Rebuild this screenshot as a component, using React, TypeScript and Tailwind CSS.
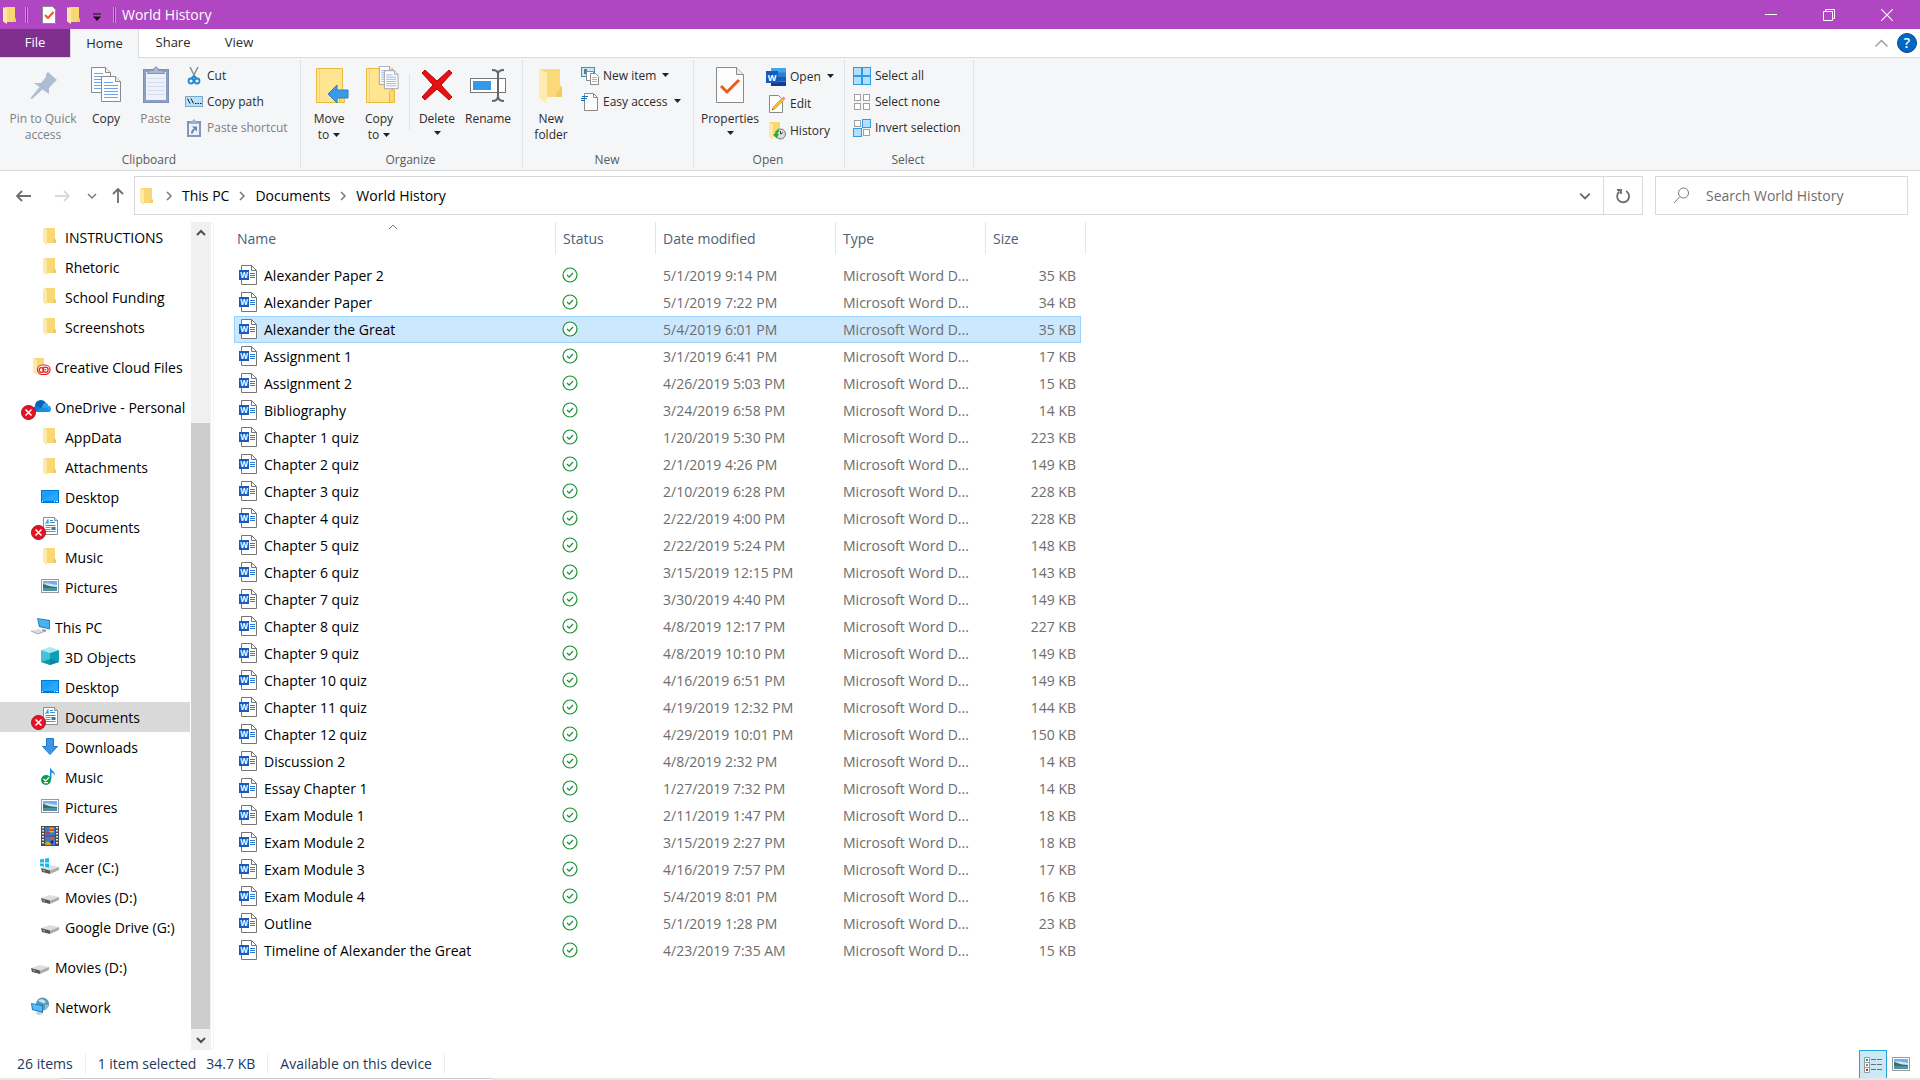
import { useState, type ReactNode } from "react"
import { clsx } from "clsx"

interface FileItem {
  name: string
  date: string
  size: string
}

interface NavItem {
  id: string
  label: string
  icon: ReactNode
  root?: boolean
  error?: boolean
}

const files: FileItem[] = [
  { name: "Alexander Paper 2", date: "5/1/2019 9:14 PM", size: "35 KB" },
  { name: "Alexander Paper", date: "5/1/2019 7:22 PM", size: "34 KB" },
  { name: "Alexander the Great", date: "5/4/2019 6:01 PM", size: "35 KB" },
  { name: "Assignment 1", date: "3/1/2019 6:41 PM", size: "17 KB" },
  { name: "Assignment 2", date: "4/26/2019 5:03 PM", size: "15 KB" },
  { name: "Bibliography", date: "3/24/2019 6:58 PM", size: "14 KB" },
  { name: "Chapter 1 quiz", date: "1/20/2019 5:30 PM", size: "223 KB" },
  { name: "Chapter 2 quiz", date: "2/1/2019 4:26 PM", size: "149 KB" },
  { name: "Chapter 3 quiz", date: "2/10/2019 6:28 PM", size: "228 KB" },
  { name: "Chapter 4 quiz", date: "2/22/2019 4:00 PM", size: "228 KB" },
  { name: "Chapter 5 quiz", date: "2/22/2019 5:24 PM", size: "148 KB" },
  { name: "Chapter 6 quiz", date: "3/15/2019 12:15 PM", size: "143 KB" },
  { name: "Chapter 7 quiz", date: "3/30/2019 4:40 PM", size: "149 KB" },
  { name: "Chapter 8 quiz", date: "4/8/2019 12:17 PM", size: "227 KB" },
  { name: "Chapter 9 quiz", date: "4/8/2019 10:10 PM", size: "149 KB" },
  { name: "Chapter 10 quiz", date: "4/16/2019 6:51 PM", size: "149 KB" },
  { name: "Chapter 11 quiz", date: "4/19/2019 12:32 PM", size: "144 KB" },
  { name: "Chapter 12 quiz", date: "4/29/2019 10:01 PM", size: "150 KB" },
  { name: "Discussion 2", date: "4/8/2019 2:32 PM", size: "14 KB" },
  { name: "Essay Chapter 1", date: "1/27/2019 7:32 PM", size: "14 KB" },
  { name: "Exam Module 1", date: "2/11/2019 1:47 PM", size: "18 KB" },
  { name: "Exam Module 2", date: "3/15/2019 2:27 PM", size: "18 KB" },
  { name: "Exam Module 3", date: "4/16/2019 7:57 PM", size: "17 KB" },
  { name: "Exam Module 4", date: "5/4/2019 8:01 PM", size: "16 KB" },
  { name: "Outline", date: "5/1/2019 1:28 PM", size: "23 KB" },
  { name: "Timeline of Alexander the Great", date: "4/23/2019 7:35 AM", size: "15 KB" },
]

/* ---------- small icons ---------- */

function FolderIcon() {
  return (
    <svg width="18" height="18" viewBox="0 0 18 18">
      <path d="M4 1h10v11l1 1v3H6z" fill="#f8d775" />
      <path d="M12.500 12l2.500 1v3h-3z" fill="#f3cb62" />
      <path d="M2 1l4 2v15l-4-2.500z" fill="#ffe9a6" />
    </svg>
  )
}

function DesktopIcon() {
  return (
    <svg width="18" height="18" viewBox="0 0 18 18">
      <rect y="3" width="18" height="13" fill="#0078d4" />
      <rect x="1" y="4" width="16" height="10" fill="#1a9fff" />
      <path d="M1 14L17 4v10z" fill="#35b0ff" opacity=".5" />
      <path d="M1 14.500h1M13 14.500h1M15 14.500h2" stroke="#fff" />
    </svg>
  )
}

function DocumentsIcon() {
  return (
    <svg width="18" height="18" viewBox="0 0 18 18">
      <path d="M2.500.5h11l3 3v14h-14z" fill="#fff" stroke="#8b8f94" />
      <path d="M13.500.5v3h3" fill="#ddd" stroke="#8b8f94" />
      <path d="M4.500 7l2.500-4.500V7M5 5.500h2.500M9 3.500h3M9 5.500h5M4.500 8.500h10" stroke="#3d8fcc" fill="none" />
      <path d="M4.500 10.500h5M4.500 12.500h5M4.500 14.500h10" stroke="#7d8b98" />
      <rect x="10.500" y="10" width="4" height="3" fill="#2f7bab" />
    </svg>
  )
}

function PicturesIcon() {
  return (
    <svg width="18" height="18" viewBox="0 0 18 18">
      <rect x=".5" y="2.500" width="17" height="13" fill="#fff" stroke="#9a9a9a" />
      <rect x="2" y="4" width="14" height="10" fill="#6fb1f2" />
      <path d="M2 7c4-2 8 0 14 1v3H2z" fill="#cfe8f5" />
      <path d="M2 7c3 0 5 3 14 3v1.500H2z" fill="#3c6e62" />
      <path d="M2 11h14v3H2z" fill="#4e93a8" />
    </svg>
  )
}

function CloudFilesIcon() {
  return (
    <svg width="20" height="18" viewBox="0 0 20 18" className="shrink-0">
      <path d="M3 1h10v14H6z" fill="#f8d775" />
      <path d="M2 1l4 2v15l-4-2.500z" fill="#ffe9a6" />
      <rect x="6.500" y="8" width="12.500" height="9.500" rx="4.700" fill="#fff" stroke="#e1251b" strokeWidth="1.200" />
      <circle cx="10.500" cy="13" r="2.300" fill="none" stroke="#e1251b" strokeWidth="1.200" />
      <circle cx="14.500" cy="12.700" r="2.600" fill="none" stroke="#e1251b" strokeWidth="1.200" />
      <circle cx="14.500" cy="12.700" r=".8" fill="#e1251b" />
    </svg>
  )
}

function OneDriveIcon() {
  return (
    <svg width="20" height="18" viewBox="0 0 20 18" className="shrink-0">
      <path d="M4 8a6 6 0 0 1 11-2l-4 6-6 2z" fill="#0364b8" />
      <path d="M0 15c0-4 3-6.500 7-6l6 6z" fill="#0f78d4" />
      <path d="M9 15l3-8c4-2 5-.5 5 1.500 4 0 4 6 .5 6.500z" fill="#28a8ea" />
      <path d="M3 15l7-4c3-1.500 6 0 9.500 2-.5 1.500-1.500 2-2.500 2z" fill="#1490df" />
    </svg>
  )
}

function ThisPcIcon() {
  return (
    <svg width="20" height="18" viewBox="0 0 20 18" className="shrink-0">
      <path d="M6 1l13 2v9.500L8 10z" fill="#2b7fc0" />
      <path d="M7 2l11 2v7.500L9 9z" fill="#45b2f3" />
      <path d="M11 12l4 1v1.500l-3 .5z" fill="#8a929a" />
      <path d="M0 14l8-2 5 2.500-6 2.500z" fill="#d8dbde" />
      <path d="M0 14l7 3 6-2.500" fill="none" stroke="#a6abb0" />
    </svg>
  )
}

function ObjectsIcon() {
  return (
    <svg width="18" height="18" viewBox="0 0 18 18">
      <path d="M9 0l9 3-9 3-9-3z" fill="#a6ecf2" />
      <path d="M0 3l9 3v12l-9-3z" fill="#41c4d8" />
      <path d="M18 3L9 6v12l9-3z" fill="#0e9fb8" />
      <path d="M0 15l9-3 9 3-9 3z" fill="#077f95" opacity=".7" />
    </svg>
  )
}

function DownloadsIcon() {
  return (
    <svg width="18" height="18" viewBox="0 0 18 18">
      <path d="M5.500 1.500h7v8h4L9 17.500l-7.500-8h4z" fill="#3b97e6" stroke="#1f7ac8" />
    </svg>
  )
}

function MusicIcon() {
  return (
    <svg width="18" height="18" viewBox="0 0 18 18">
      <path d="M9 0c1 4 6 4 4.500 9-.5-3-2-3-3-3.500V11c0 3-4 3.500-4.500 1S8 9.500 9 10z" fill="#1a8fe0" />
      <circle cx="5" cy="13" r="5" fill="#109a50" />
      <path d="M2.500 12l2 2 3.500-3.500M3 15.700h4" stroke="#fff" fill="none" strokeWidth="1.200" />
    </svg>
  )
}

function VideosIcon() {
  return (
    <svg width="18" height="20" viewBox="0 0 18 20">
      <rect width="18" height="20" fill="#4b4b4b" />
      <path d="M2 1v18M16 1v18" stroke="#e8e8e8" strokeWidth="2" strokeDasharray="1.500 1.500" />
      <rect x="4" y="1" width="10" height="8.500" fill="#3f74d8" />
      <rect x="4" y="10.500" width="10" height="8.500" fill="#3f74d8" />
      <circle cx="10.500" cy="4" r="2.600" fill="#e5b620" />
      <path d="M8 4h5M5 7h4" stroke="#d32c1c" strokeWidth="1.500" />
      <circle cx="11" cy="12.500" r="1.800" fill="#d8581e" />
      <path d="M4 19c1-5 5-4 6 0z" fill="#cda91c" />
      <path d="M9 16l3-2v4z" fill="#222" />
    </svg>
  )
}

function DriveIcon({ windows = false }: { windows?: boolean }) {
  return (
    <svg width="18" height="18" viewBox="0 0 18 18" className="overflow-visible">
      <path d="M0 11l9-3 9 2-9 3.500z" fill="#dedee0" />
      <path d="M0 11l9 2.500V17l-8-2z" fill="#55585b" />
      <path d="M9 13.500l9-3.500v3L9 17z" fill="#a9abad" />
      <path d="M2 13.500l2 .5" stroke="#8fe06a" />
      {windows && (
        <>
          <path d="M-1 1H8v9H-1z" fill="#fff" />
          <path d="M-1 2.500l4-.7v3.700h-4zM4 1.600l4-.7v4.600H4zM-1 6.500h4v3.200l-4-.6zM4 6.500h4v4l-4-.7z" fill="#1ab8f0" />
        </>
      )}
    </svg>
  )
}

function NetworkIcon() {
  return (
    <svg width="18" height="18" viewBox="0 0 18 18">
      <circle cx="11.500" cy="7" r="6.500" fill="#5a9ab8" />
      <path d="M7 4c3-3 6-2 8 1-2 3-4 0-8-1z" fill="#c5e2ec" />
      <path d="M14 8c2-1 3 0 3.500 1-1 3-3 4-4 4z" fill="#8bc0d4" />
      <path d="M0 6l12 2v8L1 13z" fill="#1f78bd" />
      <path d="M1 7l10 2v5.500L2 12.300z" fill="#57bbf8" />
      <path d="M4 16l4-1 4 2-4 1z" fill="#c3c7ca" />
    </svg>
  )
}

function ErrorBadge() {
  return (
    <svg width="15" height="15" viewBox="0 0 15 15" className="absolute -left-[10px] top-2">
      <circle cx="7.500" cy="7.500" r="7" fill="#e81123" stroke="#9c1a24" />
      <path d="M4.500 4.500l6 6M10.500 4.500l-6 6" stroke="#fff" strokeWidth="1.500" />
    </svg>
  )
}

function WordFileIcon() {
  return (
    <svg width="18" height="20" viewBox="0 0 18 20" className="mb-0.5 shrink-0">
      <path d="M2.500.5h10l5 5v14h-15z" fill="#fff" stroke="#767676" />
      <path d="M12.500.5v5h5" fill="none" stroke="#767676" />
      <path d="M11 8.500h5M11 10.500h5M11 12.500h5" stroke="#2b7cd3" />
      <rect y="5" width="10" height="10" fill="#185abd" />
      <text x="5" y="13" textAnchor="middle" fontSize="8" fontWeight="700" fill="#fff">
        W
      </text>
    </svg>
  )
}

function SyncedIcon() {
  return (
    <svg width="16" height="16" viewBox="0 0 16 16" role="img" aria-label="Available on this device" className="mb-0.5">
      <circle cx="8" cy="8" r="7" fill="#fff" stroke="#189132" strokeWidth="1.200" />
      <path d="M5 8l2.200 2.200L11 6" fill="none" stroke="#189132" strokeWidth="1.200" />
    </svg>
  )
}

function Caret() {
  return (
    <svg width="7" height="4" viewBox="0 0 7 4" className="inline-block">
      <path d="M0 0h7L3.500 4z" fill="#222" />
    </svg>
  )
}

function Chevron({ d, size = 10, color = "#666", width = 1.5 }: { d: string; size?: number; color?: string; width?: number }) {
  return (
    <svg width={size} height={size} viewBox="0 0 10 10">
      <path d={d} fill="none" stroke={color} strokeWidth={width} />
    </svg>
  )
}

const DOWN = "M1 3l4 4 4-4"
const UP = "M1 7l4-4 4 4"
const RIGHT = "M3 1l4 4-4 4"

/* ---------- ribbon icons ---------- */

function PinIcon() {
  return (
    <svg width="30" height="38" viewBox="0 0 30 38">
      <path d="M20 6l9 8-3 2.500-5 5.500v6l-6.500-4.500L4 33l-1.500-1L11.500 21 6 17h7l5-6V8z" fill="#aebdd3" />
    </svg>
  )
}

function PageShape({ x, y }: { x: number; y: number }) {
  return (
    <g transform={`translate(${x} ${y})`}>
      <path d="M.5.5h14l5 5v20H.5z" fill="#fcfdff" stroke="#8a8a8a" />
      <path d="M14.500.5v5h5" fill="#eee" stroke="#8a8a8a" />
      <path d="M3 6.500h9M3 9.500h14M3 12.500h14M3 15.500h14M3 18.500h14M3 21.500h14" stroke="#6fa4ee" />
    </g>
  )
}

function CopyIcon() {
  return (
    <svg width="30" height="38" viewBox="0 0 30 38">
      <PageShape x={0} y={1} />
      <PageShape x={10} y={10} />
    </svg>
  )
}

function PasteIcon() {
  return (
    <svg width="26" height="38" viewBox="0 0 26 38">
      <rect x=".5" y="3.500" width="25" height="33" fill="#8c9fc2" stroke="#7f92b5" />
      <rect x="3" y="6" width="20" height="28" fill="#edf2fa" />
      <path d="M4 12.500h18M4 16.500h18M4 20.500h18M4 24.500h18M4 28.500h18" stroke="#d2dcec" />
      <path d="M4 7.500l3-3h3.500c0-4.500 5-4.500 5 0H19l3 3z" fill="#a9b7d0" stroke="#8494b3" />
    </svg>
  )
}

function BigFolder({ children }: { children?: ReactNode }) {
  return (
    <svg width="40" height="38" viewBox="-6 0 40 38">
      <path d="M1.500 2.500h26v29l-3 5h-23z" fill="#ffe492" stroke="#e9bd3b" />
      <path d="M4.500 3v33" stroke="#f5d273" />
      <path d="M24.500 36.500v-11l2-1.500h3v12.500z" fill="#fbd96e" stroke="#e9bd3b" />
      {children}
    </svg>
  )
}

function NewFolderIcon() {
  return (
    <svg width="24" height="38" viewBox="0 0 24 38">
      <path d="M1 3h20v16l2 3v9H8z" fill="#f9d978" />
      <path d="M21 19l2 3v9h-5l-1-4 4-3z" fill="#f3cb62" />
      <path d="M0 3l8 4v30l-8-5z" fill="#ffeab0" />
    </svg>
  )
}

function DeleteIcon() {
  return (
    <svg width="32" height="38" viewBox="0 0 32 38">
      <path d="M4 4l12 11L28 4l3 3-11 12 11 12-3 3-12-11L4 34l-3-3 11-12L1 7z" fill="#e81010" stroke="#b30c0c" />
    </svg>
  )
}

function RenameIcon() {
  return (
    <svg width="36" height="38" viewBox="0 0 36 38">
      <rect x=".5" y="12.500" width="35" height="14" fill="#fff" stroke="#767676" />
      <rect x="3" y="15" width="18" height="9" fill="#3399ea" />
      <path d="M22 4c4 0 6 1 6 4v22c0 3-2 5-6 5M34 4c-4 0-6 1-6 4v22c0 3 2 5 6 5" fill="none" stroke="#666" strokeWidth="2" />
    </svg>
  )
}

function PropertiesIcon() {
  return (
    <svg width="28" height="38" viewBox="0 0 28 38">
      <path d="M.5 1.500h20l7 7v28H.5z" fill="#fcfcfd" stroke="#8a8a8a" />
      <path d="M20.500 1.500v7h7" fill="#eaeaea" stroke="#8a8a8a" />
      <path d="M5 20l6 6 12-12" fill="none" stroke="#ee5a1c" strokeWidth="3" />
    </svg>
  )
}

function TilesIcon({ on }: { on: boolean[] }) {
  const spots = [
    [1, 1],
    [10, 1],
    [1, 10],
    [10, 10],
  ]
  return (
    <svg width="18" height="18" viewBox="0 0 18 18">
      {spots.map(([x, y], i) =>
        on[i] ? (
          <rect key={i} x={x - 0.5} y={y - 0.5} width="8" height="8" fill="#b4e0ff" stroke="#2f9ae8" />
        ) : (
          <rect key={i} x={x + 0.5} y={y + 0.5} width="6" height="6" fill="#fff" stroke="#a0a0a0" />
        )
      )}
    </svg>
  )
}

const cutIcon = (
  <svg width="18" height="18" viewBox="0 0 18 18">
    <path d="M5 0l5.500 11M13 0L7.500 11" stroke="#8b8f94" strokeWidth="1.500" />
    <path d="M9 9l-2.500 2.500M9 9l2.500 2.500" stroke="#1e8bcd" strokeWidth="2" />
    <circle cx="6" cy="14" r="2.500" fill="none" stroke="#1e8bcd" strokeWidth="1.800" />
    <circle cx="12" cy="14" r="2.500" fill="none" stroke="#1e8bcd" strokeWidth="1.800" />
  </svg>
)

const copyPathIcon = (
  <svg width="18" height="18" viewBox="0 0 18 18">
    <rect x=".5" y="3.500" width="17" height="10" fill="#b9e0fb" stroke="#7fa8c6" />
    <path d="M2.500 5.500l2.500 5M6 5.500l2.500 5M10 10.500h1.500M12.500 10.500H14M15 10.500h1.500" stroke="#222" />
  </svg>
)

const pasteShortcutIcon = (
  <svg width="18" height="18" viewBox="0 0 18 18">
    <rect x="3" y="3" width="12" height="14" fill="#edf2fa" stroke="#8397ba" strokeWidth="2" />
    <path d="M4 5l2-2.500h1.500c0-3 3-3 3 0H12L14 5z" fill="#9fb0cc" />
    <path d="M7 14.500c0-2 .5-3 2.500-4.500" fill="none" stroke="#6c82a6" strokeWidth="2" />
    <path d="M7 7.500h5v5z" fill="#6c82a6" />
  </svg>
)

const newItemIcon = (
  <svg width="18" height="18" viewBox="0 0 18 18">
    <rect x=".5" y=".5" width="13" height="9" fill="#c8e8f8" stroke="#4f8cab" />
    <rect x="3" y="2" width="3" height="5" fill="#4a7f96" />
    <path d="M5.500 4.500h7v9h-7z" fill="#fff" stroke="#8a8a8a" />
    <path d="M9.500 6.500h5l3 3v8h-8z" fill="#fff" stroke="#8a8a8a" />
    <path d="M11 10.500h5M11 12.500h5M11 14.500h5" stroke="#b9a9c9" />
  </svg>
)

const easyAccessIcon = (
  <svg width="18" height="18" viewBox="0 0 18 18">
    <path d="M3.500.5h9l4 4v13h-13z" fill="#fdfdfd" stroke="#8a8a8a" />
    <path d="M12.500.5v4h4" fill="none" stroke="#8a8a8a" />
    <path d="M1 3.500h6M0 5.500h6M0 7.500h4" stroke="#1c6fae" />
  </svg>
)

const wordAppIcon = (
  <svg width="20" height="18" viewBox="0 0 20 18">
    <rect x="5" width="15" height="5" fill="#41a5ee" />
    <rect x="5" y="4.500" width="15" height="4.500" fill="#2b7cd3" />
    <rect x="5" y="9" width="15" height="4.500" fill="#185abd" />
    <rect x="5" y="13.500" width="15" height="4.500" fill="#103f91" />
    <rect y="3" width="12" height="12" fill="#185abd" />
    <text x="6" y="12.500" textAnchor="middle" fontSize="9" fontWeight="700" fill="#fff">
      W
    </text>
  </svg>
)

const editIcon = (
  <svg width="20" height="18" viewBox="0 0 20 18">
    <path d="M3.500.5h9l4 4v13h-13z" fill="#fdfdfd" stroke="#8a8a8a" />
    <path d="M6 15l1-3 9-9 2 2-9 9z" fill="#f5b92e" stroke="#d99a1c" strokeWidth=".5" />
    <path d="M16 3l1.500-1.500 2 2L18 5z" fill="#e58a8a" />
    <path d="M6 15l.5-1.500 1 1z" fill="#333" />
  </svg>
)

const historyIcon = (
  <svg width="20" height="18" viewBox="0 0 20 18">
    <path d="M3 0h11v15H7z" fill="#f8d775" />
    <path d="M3 0l4 3v15l-4-3z" fill="#ffe9a6" />
    <circle cx="14.500" cy="12" r="5" fill="#d9dde0" stroke="#70757a" />
    <path d="M14.500 9v3l2.500-1.500" fill="none" stroke="#444" />
    <path d="M13 8c-3 0-4 2-4 4H7l3.500 4.500L13 12h-1.500c0-1 .5-2 1.500-2z" fill="#1fae3a" />
  </svg>
)

/* ---------- ribbon ---------- */

function BigButton({ icon, lines, width, caret = false, disabled = false }: { icon: ReactNode; lines: string[]; width: string; caret?: boolean; disabled?: boolean }) {
  return (
    <button disabled={disabled} className={clsx("flex flex-col items-center leading-4 disabled:text-[#808080]", width)}>
      <span className="flex h-[45px] items-start">{icon}</span>
      {lines.map((line, i) => (
        <span key={line} className="flex items-center gap-1 whitespace-nowrap">
          {line}
          {caret && lines.length > 1 && i === lines.length - 1 && <Caret />}
        </span>
      ))}
      {caret && lines.length === 1 && (
        <span className="flex h-3 items-center">
          <Caret />
        </span>
      )}
    </button>
  )
}

function SmallButton({ icon, label, caret = false, disabled = false }: { icon: ReactNode; label: string; caret?: boolean; disabled?: boolean }) {
  return (
    <button disabled={disabled} className="flex h-[26px] items-center gap-1 whitespace-nowrap disabled:text-[#808080]">
      {icon}
      {label}
      {caret && (
        <span className="flex pb-0.5 pl-0.5">
          <Caret />
        </span>
      )}
    </button>
  )
}

function RibbonGroup({ label, width, children }: { label: string; width: string; children: ReactNode }) {
  return (
    <section aria-label={label} className={clsx("my-[2px] flex shrink-0 flex-col border-r border-[#e2e3e4]", width)}>
      <div className="flex flex-1">{children}</div>
      <div className="pr-0.5 text-center text-[#5a5a5a]">{label}</div>
    </section>
  )
}

function Ribbon() {
  return (
    <div className="flex h-[114px] border-y border-[#dadbdc] bg-[#f5f6f7] text-xs text-[#2b2b2b]">
      <RibbonGroup label="Clipboard" width="w-[301px]">
        <div className="flex pt-1.5">
          <BigButton icon={<PinIcon />} lines={["Pin to Quick", "access"]} width="w-[86px]" disabled />
          <BigButton icon={<CopyIcon />} lines={["Copy"]} width="w-10" />
          <BigButton icon={<PasteIcon />} lines={["Paste"]} width="w-[59px]" disabled />
        </div>
        <div className="pt-[3px]">
          <SmallButton icon={cutIcon} label="Cut" />
          <SmallButton icon={copyPathIcon} label="Copy path" />
          <SmallButton icon={pasteShortcutIcon} label="Paste shortcut" disabled />
        </div>
      </RibbonGroup>

      <RibbonGroup label="Organize" width="w-[222px]">
        <div className="flex pl-1 pt-1.5">
          <BigButton
            icon={
              <BigFolder>
                <path d="M13 28l9-9v5h11v8H22v5z" fill="#3b9ae8" stroke="#2a7fc4" />
              </BigFolder>
            }
            lines={["Move", "to"]}
            width="w-12"
            caret
          />
          <BigButton
            icon={
              <BigFolder>
                <g transform="translate(14 0) scale(.72)">
                  <PageShape x={0} y={0} />
                  <PageShape x={7} y={6} />
                </g>
              </BigFolder>
            }
            lines={["Copy", "to"]}
            width="w-[52px]"
            caret
          />
          <div className="ml-1 mt-2 h-14 w-px bg-[#e2e3e4]" />
          <BigButton icon={<DeleteIcon />} lines={["Delete"]} width="w-[54px]" caret />
          <BigButton icon={<RenameIcon />} lines={["Rename"]} width="w-12" />
        </div>
      </RibbonGroup>

      <RibbonGroup label="New" width="w-[171px]">
        <div className="flex pt-1.5">
          <BigButton icon={<NewFolderIcon />} lines={["New", "folder"]} width="w-14" />
        </div>
        <div className="pl-0.5 pt-[3px]">
          <SmallButton icon={newItemIcon} label="New item" caret />
          <SmallButton icon={easyAccessIcon} label="Easy access" caret />
        </div>
      </RibbonGroup>

      <RibbonGroup label="Open" width="w-[151px]">
        <div className="flex pt-1.5">
          <BigButton icon={<PropertiesIcon />} lines={["Properties"]} width="w-[72px]" caret />
        </div>
        <div className="flex flex-col gap-px pt-1">
          <SmallButton icon={wordAppIcon} label="Open" caret />
          <SmallButton icon={editIcon} label="Edit" />
          <SmallButton icon={historyIcon} label="History" />
        </div>
      </RibbonGroup>

      <RibbonGroup label="Select" width="w-[129px]">
        <div className="pl-2 pt-[3px]">
          <SmallButton icon={<TilesIcon on={[true, true, true, true]} />} label="Select all" />
          <SmallButton icon={<TilesIcon on={[false, false, false, false]} />} label="Select none" />
          <SmallButton icon={<TilesIcon on={[false, true, true, false]} />} label="Invert selection" />
        </div>
      </RibbonGroup>
    </div>
  )
}

/* ---------- window chrome ---------- */

function TitleBar() {
  const windowButton = "flex w-[58px] items-center justify-center"

  return (
    <header className="flex h-[29px] items-center bg-[#b146c2] pl-px text-white">
      <FolderIcon />
      <div className="ml-1.5 h-4 w-[3px] border-x border-[#cf8fd9] bg-[#7c3188]" />
      <button aria-label="Properties" className="ml-[13px]">
        <svg width="16" height="18" viewBox="0 0 16 18">
          <path d="M1.500.5h10l3 3v14h-13z" fill="#fff" stroke="#8a8a8a" />
          <path d="M4 9l3 3 5.500-6" fill="none" stroke="#ee5a1c" strokeWidth="2" />
        </svg>
      </button>
      <button aria-label="New folder" className="ml-2">
        <FolderIcon />
      </button>
      <button aria-label="Customize Quick Access Toolbar" className="ml-2.5 mt-1">
        <svg width="8" height="8" viewBox="0 0 8 8">
          <path d="M0 1h8" stroke="#111" />
          <path d="M0 3.500h8L4 8z" fill="#111" />
        </svg>
      </button>
      <div className="ml-3 h-4 w-[3px] border-x border-[#cf8fd9] bg-[#7c3188]" />
      <h1 className="ml-1.5 text-sm">World History</h1>
      <div className="ml-auto flex h-full pr-1">
        <button aria-label="Minimize" className={windowButton}>
          <svg width="12" height="12" viewBox="0 0 12 12">
            <path d="M0 5.500h12" stroke="#fff" />
          </svg>
        </button>
        <button aria-label="Restore" className={windowButton}>
          <svg width="12" height="12" viewBox="0 0 12 12">
            <path d="M.5 2.500h9v9h-9zM2.500 2.500v-2h9v9h-2" fill="none" stroke="#fff" />
          </svg>
        </button>
        <button aria-label="Close" className={windowButton}>
          <svg width="12" height="12" viewBox="0 0 12 12">
            <path d="M0 0l12 12M12 0L0 12" stroke="#fff" strokeWidth="1.200" />
          </svg>
        </button>
      </div>
    </header>
  )
}

function Tabs() {
  return (
    <nav className="relative flex h-7 text-[13px] text-[#2b2b2b]">
      <button className="w-[70px] bg-[#7f2f8d] text-white">File</button>
      <button className="z-10 -mb-px w-[69px] border-x border-[#dadbdc] bg-[#f5f6f7]">Home</button>
      <button className="w-[68px]">Share</button>
      <button className="w-16">View</button>
      <div className="ml-auto flex items-center gap-2 pr-[3px]">
        <button aria-label="Minimize the Ribbon">
          <Chevron d={UP} size={15} color="#a0a0a0" width={1} />
        </button>
        <button aria-label="Help">
          <svg width="20" height="20" viewBox="0 0 20 20">
            <circle cx="10" cy="10" r="9.500" fill="#0067c5" stroke="#0a4a86" />
            <text x="10" y="15" textAnchor="middle" fontSize="14" fontWeight="600" fill="#fff">
              ?
            </text>
          </svg>
        </button>
      </div>
    </nav>
  )
}

function AddressBar() {
  const crumbs = ["This PC", "Documents", "World History"]
  return (
    <div className="flex h-[51px] items-center pr-3 pt-px pb-[3px]">
      <div className="flex w-[134px] shrink-0 items-center pl-4">
        <button aria-label="Back">
          <svg width="15" height="12" viewBox="0 0 15 12">
            <path d="M15 6H1M6 1L1 6l5 5" fill="none" stroke="#6d6d6d" strokeWidth="1.800" />
          </svg>
        </button>
        <button aria-label="Forward" className="ml-6">
          <svg width="15" height="12" viewBox="0 0 15 12">
            <path d="M0 6h14M9 1l5 5-5 5" fill="none" stroke="#d9d9d9" strokeWidth="1.800" />
          </svg>
        </button>
        <button aria-label="Recent locations" className="ml-[17px]">
          <Chevron d={DOWN} color="#777" />
        </button>
        <button aria-label="Up" className="ml-[15px]">
          <svg width="12" height="15" viewBox="0 0 12 15">
            <path d="M6 15V1M1 6l5-5 5 5" fill="none" stroke="#6d6d6d" strokeWidth="1.800" />
          </svg>
        </button>
      </div>
      <div className="flex h-[39px] flex-1 items-center border border-[#d9d9d9] pl-[3px] text-sm text-black">
        <FolderIcon />
        <ol className="flex flex-1 items-center pl-2">
          {crumbs.map((crumb) => (
            <li key={crumb} className="flex items-center">
              <Chevron d={RIGHT} color="#777" />
              <a href="#" className="px-2">
                {crumb}
              </a>
            </li>
          ))}
        </ol>
        <button aria-label="Previous locations" className="px-3">
          <Chevron d={DOWN} size={12} />
        </button>
        <button aria-label="Refresh" className="flex h-full w-[39px] items-center justify-center border-l border-[#d9d9d9]">
          <svg width="16" height="16" viewBox="0 0 16 16">
            <path d="M11 3a6 6 0 1 1-6.500.5M2 2h4v4" fill="none" stroke="#6d6d6d" strokeWidth="1.800" />
          </svg>
        </button>
      </div>
      <div className="ml-3 flex h-[39px] w-[253px] items-center border border-[#d9d9d9] pl-[17px]">
        <svg width="17" height="17" viewBox="0 0 17 17" className="shrink-0">
          <circle cx="10.500" cy="6" r="5" fill="none" stroke="#777" />
          <path d="M7 9.500L1 16" stroke="#777" />
        </svg>
        <input type="search" aria-label="Search World History" placeholder="Search World History" className="ml-4 w-full text-sm outline-none placeholder:text-[#6d6d6d]" />
      </div>
    </div>
  )
}

/* ---------- navigation pane ---------- */

const navGroups: NavItem[][] = [
  [
    { id: "instructions", label: "INSTRUCTIONS", icon: <FolderIcon /> },
    { id: "rhetoric", label: "Rhetoric", icon: <FolderIcon /> },
    { id: "funding", label: "School Funding", icon: <FolderIcon /> },
    { id: "screenshots", label: "Screenshots", icon: <FolderIcon /> },
  ],
  [{ id: "cc", label: "Creative Cloud Files", icon: <CloudFilesIcon />, root: true }],
  [
    { id: "onedrive", label: "OneDrive - Personal", icon: <OneDriveIcon />, root: true, error: true },
    { id: "appdata", label: "AppData", icon: <FolderIcon /> },
    { id: "attachments", label: "Attachments", icon: <FolderIcon /> },
    { id: "od-desktop", label: "Desktop", icon: <DesktopIcon /> },
    { id: "od-documents", label: "Documents", icon: <DocumentsIcon />, error: true },
    { id: "od-music", label: "Music", icon: <FolderIcon /> },
    { id: "od-pictures", label: "Pictures", icon: <PicturesIcon /> },
  ],
  [
    { id: "pc", label: "This PC", icon: <ThisPcIcon />, root: true },
    { id: "objects", label: "3D Objects", icon: <ObjectsIcon /> },
    { id: "desktop", label: "Desktop", icon: <DesktopIcon /> },
    { id: "documents", label: "Documents", icon: <DocumentsIcon />, error: true },
    { id: "downloads", label: "Downloads", icon: <DownloadsIcon /> },
    { id: "music", label: "Music", icon: <MusicIcon /> },
    { id: "pictures", label: "Pictures", icon: <PicturesIcon /> },
    { id: "videos", label: "Videos", icon: <VideosIcon /> },
    { id: "c", label: "Acer (C:)", icon: <DriveIcon windows /> },
    { id: "d", label: "Movies (D:)", icon: <DriveIcon /> },
    { id: "g", label: "Google Drive (G:)", icon: <DriveIcon /> },
  ],
  [{ id: "d-root", label: "Movies (D:)", icon: <DriveIcon />, root: true }],
  [{ id: "network", label: "Network", icon: <NetworkIcon />, root: true }],
]

function Sidebar() {
  const [current, setCurrent] = useState("documents")

  return (
    <aside className="flex w-[214px] shrink-0 border-r border-[#f5f5f5] text-sm text-black">
      <nav className="flex w-[191px] flex-col gap-2.5 overflow-hidden pr-px">
        {navGroups.map((group) => (
          <ul key={group[0].id}>
            {group.map((item) => (
              <li key={item.id}>
                <button
                  onClick={() => setCurrent(item.id)}
                  className={clsx(
                    "flex h-[30px] w-full items-center gap-1.5 whitespace-nowrap",
                    item.root ? "pl-[31px]" : "pl-[41px]",
                    current === item.id && "bg-[#d9d9d9]"
                  )}
                >
                  <span className="relative mb-0.5 flex w-[18px] shrink-0">
                    {item.icon}
                    {item.error && <ErrorBadge />}
                  </span>
                  <span className="pt-px">{item.label}</span>
                </button>
              </li>
            ))}
          </ul>
        ))}
      </nav>
      {/* scroll bar */}
      <div className="flex w-5 flex-col items-center bg-[#f0f0f0] pr-px">
        <button aria-label="Scroll up" className="flex h-[21px] items-center">
          <Chevron d={UP} color="#505050" width={2} />
        </button>
        <div className="flex-[180]" />
        <div className="w-full flex-[606] bg-[#cdcdcd]" />
        <button aria-label="Scroll down" className="flex h-[21px] items-center">
          <Chevron d={DOWN} color="#505050" width={2} />
        </button>
      </div>
    </aside>
  )
}

/* ---------- file list ---------- */

function FileTable() {
  const [selected, setSelected] = useState("Alexander the Great")
  const head = "h-8 border-r border-[#e5e5e5] px-[7px] pt-0.5 font-normal"

  return (
    <main className="flex-1 overflow-hidden pl-5">
      <table className="w-[852px] table-fixed border-separate border-spacing-0 whitespace-nowrap text-left text-sm text-[#6d6d6d]">
        <colgroup>
          <col className="w-[322px]" />
          <col className="w-[100px]" />
          <col className="w-[180px]" />
          <col className="w-[150px]" />
          <col className="w-[95px]" />
          <col className="w-[5px]" />
        </colgroup>
        <thead className="text-[#4c607a]">
          <tr>
            <th className={clsx(head, "relative pl-[3px]")}>
              Name
              <span className="absolute inset-x-0 top-0 flex justify-center pr-1">
                <Chevron d={UP} color="#777" width={1} />
              </span>
            </th>
            <th className={head}>Status</th>
            <th className={head}>Date modified</th>
            <th className={head}>Type</th>
            <th className={head} colSpan={2}>
              Size
            </th>
          </tr>
          <tr aria-hidden="true">
            <td className="h-2" colSpan={6} />
          </tr>
        </thead>
        <tbody>
          {files.map((file) => {
            const active = file.name === selected
            const cell = clsx("h-[27px] border-y pt-px", active ? "border-[#99d1ff] bg-[#cce8ff]" : "border-transparent")
            return (
              <tr key={file.name} onClick={() => setSelected(file.name)}>
                <td className={clsx(cell, "border-l pl-1 text-black")}>
                  <span className="flex items-center gap-[7px]">
                    <WordFileIcon />
                    {file.name}
                  </span>
                </td>
                <td className={clsx(cell, "pl-1.5")}>
                  <SyncedIcon />
                </td>
                <td className={clsx(cell, "px-[7px]")}>{file.date}</td>
                <td className={clsx(cell, "px-[7px]")}>Microsoft Word D...</td>
                <td className={clsx(cell, "border-r pr-1 text-right")}>{file.size}</td>
                <td />
              </tr>
            )
          })}
        </tbody>
      </table>
    </main>
  )
}

function StatusBar() {
  return (
    <footer className="flex h-7 items-center pl-[17px] pr-2.5 text-sm text-[#1e395b]">
      <span className="border-r border-[#ececec] pr-3">26 items</span>
      <span className="border-r border-[#ececec] px-3">
        1 item selected<span className="pl-2.5">34.7 KB</span>
      </span>
      <span className="border-r border-[#ececec] px-3">Available on this device</span>
      <div className="ml-auto flex h-full items-center gap-[5px]">
        <button aria-label="Details view" className="flex h-full w-7 items-center justify-center border border-b-0 border-[#26a0da] bg-[#cbe8f6]">
          <svg width="18" height="16" viewBox="0 0 18 16">
            <path d="M.5.500h5v5h-5zM.5 5.500h5v5h-5zM.5 10.500h5v5h-5z" fill="#fff" stroke="#9a9a9a" />
            <path d="M2 3h2" stroke="#3d8fcc" strokeWidth="2" />
            <path d="M2 8h2" stroke="#7d9a3c" strokeWidth="2" />
            <path d="M2 13h2" stroke="#c0302a" strokeWidth="2" />
            <path d="M7 2.500h5M13 2.500h5M7 7.500h5M13 7.500h5M7 12.500h5M13 12.500h5" stroke="#6d6d6d" />
          </svg>
        </button>
        <button aria-label="Large icons view">
          <PicturesIcon />
        </button>
      </div>
    </footer>
  )
}

/* Top edge of the taskbar, with its search box */
function TaskbarEdge() {
  return (
    <div className="flex h-0.5 bg-[#e6e8e8] pl-[61px]">
      <div className="w-[430px] border-t border-[#c4c8c8] bg-white" />
    </div>
  )
}

export default function App() {
  return (
    <div className="flex h-screen flex-col overflow-hidden bg-white font-['Open_Sans','Noto_Sans',sans-serif]">
      <TitleBar />
      <Tabs />
      <Ribbon />
      <AddressBar />
      <div className="flex min-h-0 flex-1">
        <Sidebar />
        <FileTable />
      </div>
      <StatusBar />
      <TaskbarEdge />
    </div>
  )
}
